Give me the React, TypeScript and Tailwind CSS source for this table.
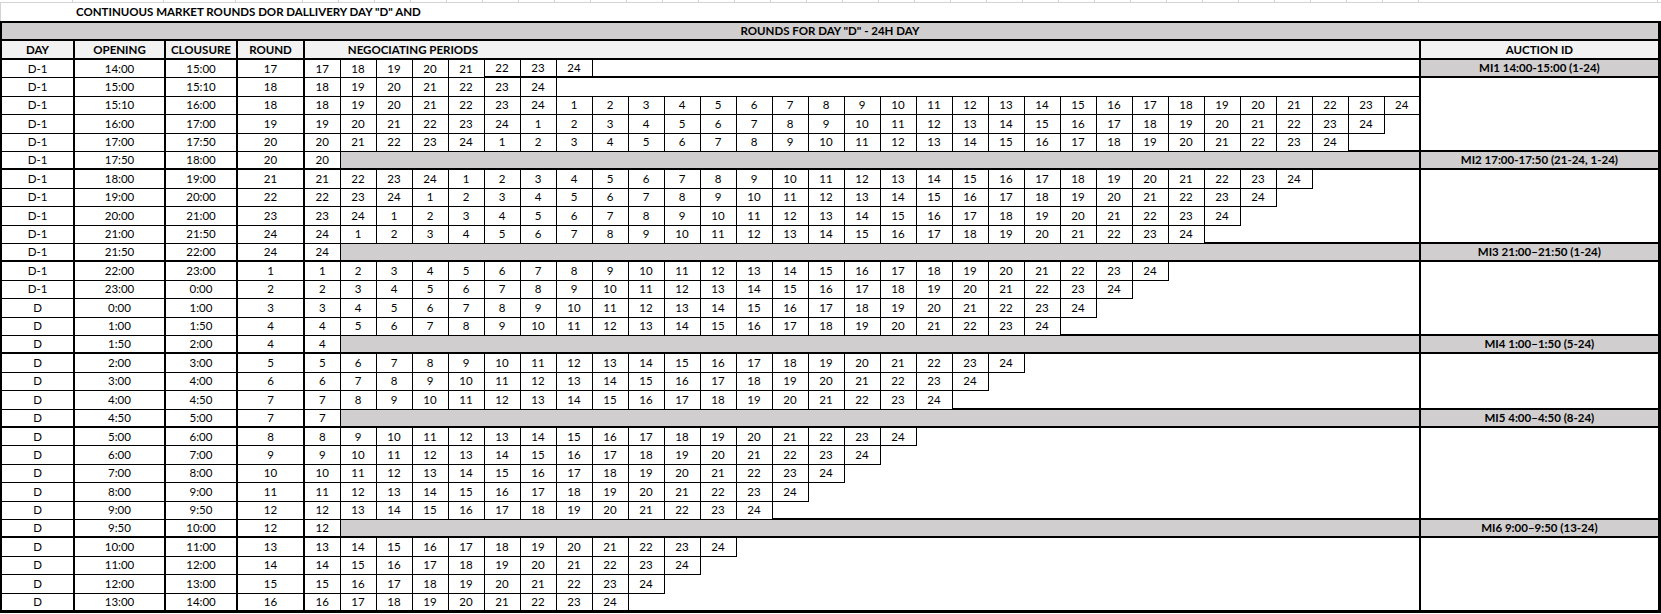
type Kind = "s" | "w" | "g";

const ROWS: [string, string, string, number, Kind][] = [
  ["D-1", "14:00", "15:00", 17, "s"],
  ["D-1", "15:00", "15:10", 18, "s"],
  ["D-1", "15:10", "16:00", 18, "w"],
  ["D-1", "16:00", "17:00", 19, "w"],
  ["D-1", "17:00", "17:50", 20, "w"],
  ["D-1", "17:50", "18:00", 20, "g"],
  ["D-1", "18:00", "19:00", 21, "w"],
  ["D-1", "19:00", "20:00", 22, "w"],
  ["D-1", "20:00", "21:00", 23, "w"],
  ["D-1", "21:00", "21:50", 24, "w"],
  ["D-1", "21:50", "22:00", 24, "g"],
  ["D-1", "22:00", "23:00", 1, "s"],
  ["D-1", "23:00", "0:00", 2, "s"],
  ["D", "0:00", "1:00", 3, "s"],
  ["D", "1:00", "1:50", 4, "s"],
  ["D", "1:50", "2:00", 4, "g"],
  ["D", "2:00", "3:00", 5, "s"],
  ["D", "3:00", "4:00", 6, "s"],
  ["D", "4:00", "4:50", 7, "s"],
  ["D", "4:50", "5:00", 7, "g"],
  ["D", "5:00", "6:00", 8, "s"],
  ["D", "6:00", "7:00", 9, "s"],
  ["D", "7:00", "8:00", 10, "s"],
  ["D", "8:00", "9:00", 11, "s"],
  ["D", "9:00", "9:50", 12, "s"],
  ["D", "9:50", "10:00", 12, "g"],
  ["D", "10:00", "11:00", 13, "s"],
  ["D", "11:00", "12:00", 14, "s"],
  ["D", "12:00", "13:00", 15, "s"],
  ["D", "13:00", "14:00", 16, "s"],
];

// auction column: grey label rows and blank merged blocks
const AUCTION: Record<number, { label?: string; span: number }> = {
  0: { label: "MI1 14:00-15:00 (1-24)", span: 1 },
  1: { span: 4 },
  5: { label: "MI2 17:00-17:50 (21-24, 1-24)", span: 1 },
  6: { span: 4 },
  10: { label: "MI3 21:00–21:50 (1-24)", span: 1 },
  11: { span: 4 },
  15: { label: "MI4 1:00–1:50 (5-24)", span: 1 },
  16: { span: 3 },
  19: { label: "MI5 4:00–4:50 (8-24)", span: 1 },
  20: { span: 5 },
  25: { label: "MI6 9:00–9:50 (13-24)", span: 1 },
  26: { span: 4 },
};

const PERIOD_COLS = 31;
const range = (a: number, b: number) => Array.from({ length: b - a + 1 }, (_, i) => a + i);

function periodsOf(round: number, kind: Kind) {
  if (kind === "g") return [round];
  if (kind === "w") return [...range(round, 24), ...range(1, 24)];
  return range(round, 24);
}

const COL_CLASSES = [
  "w-[73px]",
  "w-[91px]",
  "w-[72px]",
  "w-[67px]",
  ...Array(PERIOD_COLS).fill("w-[36px]"),
  "w-[239px]",
];

const grey = "bg-[#d0cece]";
const head = "bg-[#f2f2f2]";

export default function App() {
  const counts = ROWS.map((r) => periodsOf(r[3], r[4]).length);

  return (
    <div className="w-[1661px] h-[614px] overflow-hidden bg-white text-black font-['Lato',sans-serif] text-[11.5px]">
      {/* gridlines of the sheet row above */}
      <div className="flex h-[3px] border-b border-[#d4d4d4]">
        {COL_CLASSES.map((c, i) => (
          <div key={i} className={`${c} shrink-0 border-r border-[#d4d4d4]`} />
        ))}
      </div>

      <div className="h-[18px] whitespace-nowrap border-l border-[#d4d4d4] pl-[75px] font-bold leading-[18px]">
        CONTINUOUS MARKET ROUNDS DOR DALLIVERY DAY "D" AND
      </div>

      <table className="w-[1658px] table-fixed border-collapse leading-none">
        <colgroup>
          {COL_CLASSES.map((c, i) => (
            <col key={i} className={c} />
          ))}
        </colgroup>
        <tbody>
          <tr className="h-[18px]">
            <td colSpan={36} className={`${grey} border-2 border-r-[3px] border-black p-0 text-center font-bold`}>
              ROUNDS FOR DAY "D" - 24H DAY
            </td>
          </tr>
          <tr className="h-[19px]">
            {["DAY", "OPENING", "CLOUSURE", "ROUND"].map((h) => (
              <td key={h} className={`${head} border-2 border-black p-0 text-center font-bold`}>
                {h}
              </td>
            ))}
            <td colSpan={PERIOD_COLS} className={`${head} border-2 border-black p-0 font-bold`}>
              <div className="w-[216px] text-center">NEGOCIATING PERIODS</div>
            </td>
            <td className={`${head} border-2 border-r-[3px] border-black p-0 text-center font-bold`}>AUCTION ID</td>
          </tr>

          {ROWS.map(([day, open, close, round, kind], r) => {
            const periods = periodsOf(round, kind);
            const isGrey = kind === "g";
            const last = r === ROWS.length - 1;
            const above = r > 0 ? counts[r - 1] : PERIOD_COLS;
            const auction = AUCTION[r];
            const rowH = r % 5 === 1 || r % 5 === 3 ? "h-[19px]" : "h-[18px]";
            const leftBottom = last ? "border-b-[3px]" : isGrey ? "border-b-2" : "border-b";

            return (
              <tr key={r} className={rowH}>
                {[day, open, close, String(round)].map((v, i) => (
                  <td key={i} className={`border-x-2 border-t ${leftBottom} border-black p-0 text-center`}>
                    {v}
                  </td>
                ))}

                {Array.from({ length: PERIOD_COLS }, (_, c) => {
                  if (c < periods.length) {
                    return (
                      <td
                        key={c}
                        className={`border border-black p-0 text-center ${isGrey ? "border-b-2" : ""} ${
                          last ? "border-b-[3px]" : ""
                        } ${r === 0 && c >= 5 ? "border-b-2" : ""} ${c === 0 ? "border-l-2" : ""}`}
                      >
                        {periods[c]}
                      </td>
                    );
                  }
                  if (isGrey) {
                    return (
                      <td
                        key={c}
                        className={`${grey} border-b-2 border-black p-0 ${c < above ? "border-t" : "border-t-2"}`}
                      />
                    );
                  }
                  return (
                    <td
                      key={c}
                      className={`border-black p-0 ${r === 0 && c >= 5 ? "border-b-2" : ""} ${
                        last ? "border-b-[3px]" : ""
                      }`}
                    />
                  );
                })}

                {auction &&
                  (auction.label ? (
                    <td className={`${grey} border-2 border-r-[3px] border-black p-0 text-center font-bold`}>
                      {auction.label}
                    </td>
                  ) : (
                    <td
                      rowSpan={auction.span}
                      className={`border-2 border-r-[3px] border-black p-0 ${
                        r + auction.span === ROWS.length ? "border-b-[3px]" : ""
                      }`}
                    />
                  ))}
              </tr>
            );
          })}
        </tbody>
      </table>
    </div>
  );
}
